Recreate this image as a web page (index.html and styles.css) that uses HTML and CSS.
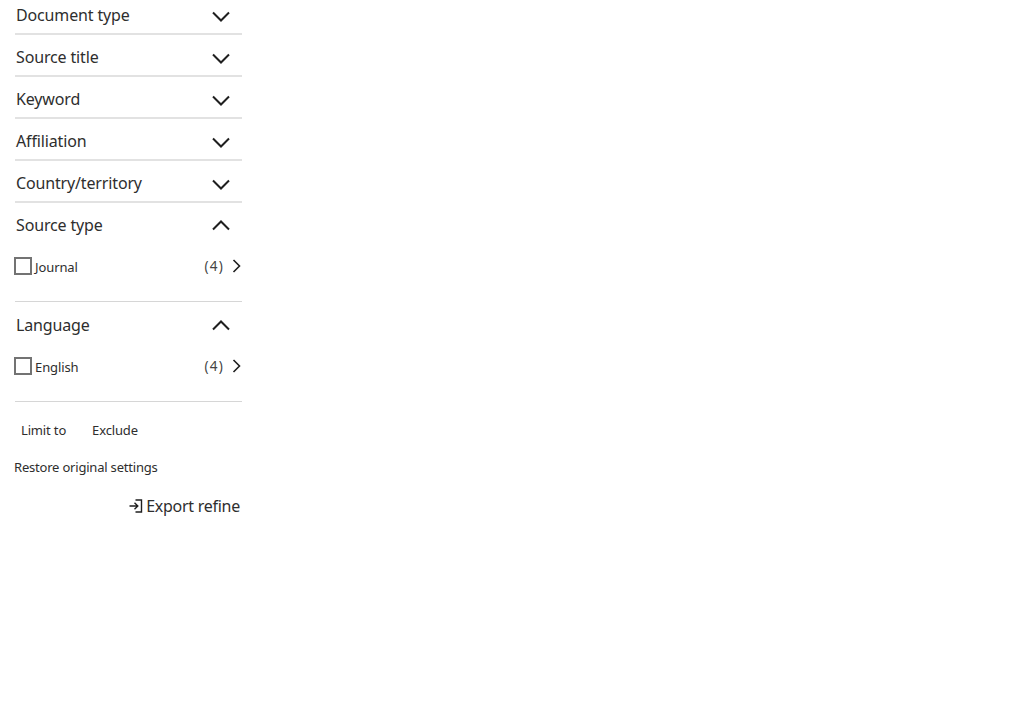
FILE: index.html
```html
<!DOCTYPE html>
<html lang="en">
<head>
<meta charset="utf-8">
<title>Refine results</title>
<link rel="stylesheet" href="styles.css">
</head>
<body>
<aside class="panel">
  <section class="facet"><div class="facet-head"><span>Document type</span><svg class="chev" viewBox="0 0 18 11"><path d="M1 1.5l8 8 8-8"/></svg></div></section>
  <section class="facet"><div class="facet-head"><span>Source title</span><svg class="chev" viewBox="0 0 18 11"><path d="M1 1.5l8 8 8-8"/></svg></div></section>
  <section class="facet"><div class="facet-head"><span>Keyword</span><svg class="chev" viewBox="0 0 18 11"><path d="M1 1.5l8 8 8-8"/></svg></div></section>
  <section class="facet"><div class="facet-head"><span>Affiliation</span><svg class="chev" viewBox="0 0 18 11"><path d="M1 1.5l8 8 8-8"/></svg></div></section>
  <section class="facet"><div class="facet-head"><span>Country/territory</span><svg class="chev" viewBox="0 0 18 11"><path d="M1 1.5l8 8 8-8"/></svg></div></section>
  <section class="facet open">
    <div class="facet-head"><span>Source type</span><svg class="chev up" viewBox="0 0 18 11"><path d="M1 9.5l8-8 8 8"/></svg></div>
    <div class="option"><span class="box"></span><span class="label">Journal</span><span class="count">(4)</span><svg class="more" viewBox="0 0 9 14"><path d="M1.5 1l6 6-6 6"/></svg></div>
  </section>
  <section class="facet open">
    <div class="facet-head"><span>Language</span><svg class="chev up" viewBox="0 0 18 11"><path d="M1 9.5l8-8 8 8"/></svg></div>
    <div class="option"><span class="box"></span><span class="label">English</span><span class="count">(4)</span><svg class="more" viewBox="0 0 9 14"><path d="M1.5 1l6 6-6 6"/></svg></div>
  </section>
  <div class="actions"><span>Limit to</span><span>Exclude</span></div>
  <div class="restore">Restore original settings</div>
  <div class="export"><svg class="export-icon" viewBox="0 0 14 14"><path d="M0.5 7h8M5.5 3.8L8.8 7l-3.3 3.2M6.5 1h6v12h-6"/></svg><span>Export refine</span></div>
</aside>
</body>
</html>
```
FILE: styles.css
```css
html, body { margin: 0; padding: 0; background: #fff; }
body { font-family: "Noto Sans", sans-serif; color: #2e2e2e; height: 723px; overflow: hidden; }
.panel { width: 227px; margin-left: 15px; margin-top: -7px; display: flex; flex-direction: column; }
.facet { height: 40px; border-bottom: 2px solid #e2e2e2; }
.facet.open { height: 98px; border-bottom: 1px solid #d6d6d6; margin-bottom: 1px; }
.facet-head { height: 40px; display: flex; align-items: center; justify-content: space-between; padding: 4px 12px 0 1px; box-sizing: border-box; font-size: 16px; letter-spacing: -0.15px; }
.chev { width: 18px; height: 11px; fill: none; stroke: #1f1f1f; stroke-width: 2; margin-top: 2px; }
.chev.up { margin-top: 0; }
.option { display: flex; align-items: center; height: 18px; margin: 14px 0 0 -1px; font-size: 13px; }
.box { width: 14px; height: 14px; border: 2px solid #737373; flex: none; }
.label { margin-left: 3px; flex: 1; padding-top: 1px; letter-spacing: -0.1px; }
.count { letter-spacing: 1.2px; font-size: 13.5px; margin-right: 8px; color: #444; }
.more { width: 9px; height: 14px; fill: none; stroke: #1f1f1f; stroke-width: 1.6; margin-right: 1px; }
.actions { display: flex; gap: 26px; padding: 18px 0 0 6px; font-size: 13px; line-height: 18px; letter-spacing: -0.15px; }
.restore { margin: 19px 0 0 -1px; font-size: 13px; line-height: 18px; letter-spacing: -0.2px; }
.export { display: flex; align-items: center; justify-content: flex-end; gap: 3px; margin: 19px 2px 0 0; font-size: 16px; line-height: 22px; letter-spacing: -0.27px; }
.export-icon { width: 14px; height: 14px; fill: none; stroke: #1f1f1f; stroke-width: 1.4; }
```
